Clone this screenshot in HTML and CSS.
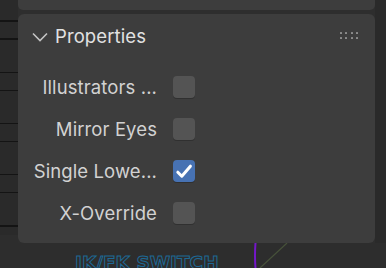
FILE: index.html
```html
<!DOCTYPE html>
<html>
<head>
<meta charset="utf-8">
<link rel="stylesheet" href="styles.css">
</head>
<body>
<div class="viewport">
  <div class="scene">
    <span class="scene-text">IK/FK SWITCH</span>
    <svg class="scene-lines" width="386" height="25" viewBox="0 0 386 25">
      <path d="M255.5 0 Q254.5 12 255.5 25" stroke="#7417c9" stroke-width="2" fill="none"/>
      <path d="M287 0 L260 25" stroke="#47523a" stroke-width="1.2" fill="none"/>
    </svg>
  </div>
  <div class="layout">
    <div class="outliner"></div>
    <div class="sidebar">
      <div class="panel-stub"></div>
      <section class="panel">
        <header class="panel-head">
          <svg class="chevron" width="16" height="10" viewBox="0 0 16 10">
            <path d="M1 1.5 L8 8.5 L15 1.5" stroke="#c4c4c4" stroke-width="1.6" fill="none"/>
          </svg>
          <span class="panel-title">Properties</span>
          <span class="grip">
            <i></i><i></i><i></i><i></i><i></i><i></i><i></i><i></i>
          </span>
        </header>
        <div class="props">
          <div class="prop">
            <span class="prop-label">Illustrators ...</span>
            <span class="check"></span>
          </div>
          <div class="prop">
            <span class="prop-label">Mirror Eyes</span>
            <span class="check"></span>
          </div>
          <div class="prop">
            <span class="prop-label">Single Lowe...</span>
            <span class="check on">
              <svg width="22" height="22" viewBox="0 0 22 22">
                <path d="M4.8 12.2 L8.8 16.2 L17.4 6.2" stroke="#ffffff" stroke-width="3" fill="none" stroke-linecap="round" stroke-linejoin="round"/>
              </svg>
            </span>
          </div>
          <div class="prop">
            <span class="prop-label">X-Override</span>
            <span class="check"></span>
          </div>
        </div>
      </section>
    </div>
    <div class="scrollbar"></div>
  </div>
</div>
</body>
</html>
```

FILE: styles.css
```css
html, body {
  margin: 0;
  padding: 0;
}
body {
  width: 386px;
  height: 268px;
  overflow: hidden;
  background: #2c2c2c;
  font-family: Inter, "Noto Sans", sans-serif;
}
.viewport {
  position: relative;
  width: 386px;
  height: 268px;
  background: #2d2d2d;
}
.scene {
  position: absolute;
  left: 0;
  top: 243px;
  width: 386px;
  height: 25px;
}
.scene-text {
  position: absolute;
  left: 75px;
  top: 11px;
  font-family: "DejaVu Sans", sans-serif;
  font-weight: bold;
  font-size: 18.5px;
  line-height: 1;
  color: transparent;
  -webkit-text-stroke: 1px #1d6894;
  white-space: nowrap;
}
.scene-lines {
  position: absolute;
  left: 0;
  top: 0;
}
.layout {
  position: relative;
  display: grid;
  grid-template-columns: 18px 357px 11px;
  height: 243px;
}
.outliner {
  height: 235px;
  background-color: #2a2a2a;
  background-image: repeating-linear-gradient(to bottom,
    transparent 0px, transparent 20.5px,
    #141414 20.5px, #141414 21.7px,
    transparent 21.7px, transparent 38.5px,
    #141414 38.5px, #141414 39.7px,
    transparent 39.7px, transparent 51.2px);
}
.sidebar {
  display: flex;
  flex-direction: column;
  gap: 4px;
  background: #2e2e2e;
}
.panel-stub {
  height: 10px;
  background: #3d3d3d;
  border-radius: 0 0 5px 5px;
}
.panel {
  height: 229px;
  box-sizing: border-box;
  background: #3d3d3d;
  border-radius: 6px;
  display: flex;
  flex-direction: column;
}
.panel-head {
  height: 44px;
  display: flex;
  align-items: center;
  padding: 0 17px 0 14px;
}
.chevron {
  display: block;
  flex: none;
  margin-top: 1px;
}
.panel-title {
  margin-left: 7px;
  font-size: 18.5px;
  color: #e2e2e2;
  letter-spacing: 0.1px;
  flex: 1;
}
.grip {
  display: grid;
  grid-template-columns: repeat(4, 2px);
  grid-auto-rows: 2px;
  column-gap: 3.3px;
  row-gap: 3.4px;
  margin-top: -1px;
}
.grip i {
  display: block;
  width: 2px;
  height: 2px;
  background: #8e8e8e;
  border-radius: 0.5px;
}
.props {
  margin-top: 8px;
  display: flex;
  flex-direction: column;
}
.prop {
  height: 42px;
  display: grid;
  grid-template-columns: 139px 22px;
  column-gap: 16px;
  align-items: center;
}
.prop-label {
  text-align: right;
  font-size: 18.5px;
  color: #d2d2d2;
  letter-spacing: 0.1px;
  white-space: nowrap;
}
.check {
  width: 22px;
  height: 22px;
  box-sizing: border-box;
  border-radius: 4px;
  background: #545454;
  box-shadow: 0 1px 0 #303030;
  display: block;
}
.check svg {
  display: block;
}
.check.on {
  background: #4772b3;
}
.scrollbar {
  background: #2a2a2a;
}
```
